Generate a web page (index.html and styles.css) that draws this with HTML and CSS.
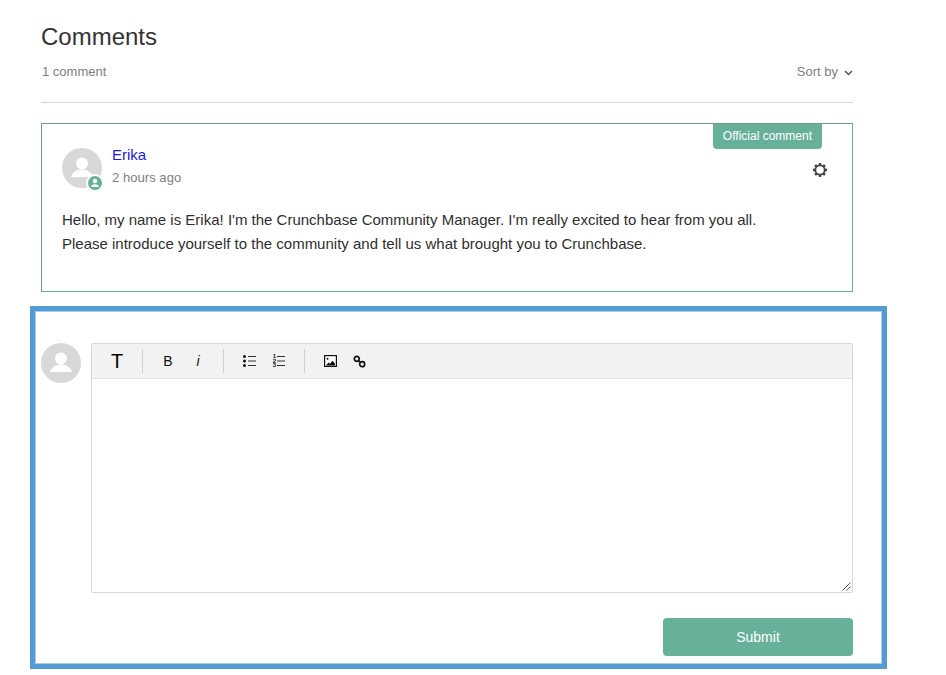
FILE: index.html
```html
<!DOCTYPE html>
<html lang="en">
<head>
<meta charset="utf-8">
<title>Comments</title>
<link rel="stylesheet" href="styles.css">
</head>
<body>
<main class="page">
  <header class="head">
    <h1 class="title">Comments</h1>
    <div class="meta">
      <span class="count">1 comment</span>
      <span class="sort">Sort by
        <svg class="chev" width="9" height="6" viewBox="0 0 9 6"><path d="M1 1l3.500 3.500L8 1" fill="none" stroke="#555" stroke-width="1.500"/></svg>
      </span>
    </div>
  </header>

  <article class="card">
    <span class="badge">Official comment</span>
    <svg class="gear" width="14" height="14" viewBox="0 0 16 16"><path fill="#444" fill-rule="evenodd" d="M6.700 0h2.600l.4 2.100 1.200.5 1.800-1.200 1.900 1.900-1.200 1.800.5 1.200 2.100.4v2.600l-2.100.4-.5 1.200 1.200 1.800-1.900 1.900-1.800-1.200-1.200.5-.4 2.100H6.700l-.4-2.100-1.200-.5-1.800 1.200-1.900-1.900 1.200-1.800-.5-1.200L0 9.300V6.700l2.100-.4.5-1.200-1.200-1.800 1.900-1.900 1.800 1.200 1.200-.5zM8 3.700a4.300 4.300 0 1 0 0 8.600 4.300 4.300 0 0 0 0-8.600z"/></svg>
    <div class="author">
      <div class="avatar">
        <svg width="40" height="40" viewBox="0 0 40 40"><circle cx="20" cy="15.500" r="6" fill="#fff"/><path d="M9 29c1-5 6-7.500 11-7.500S30 24 31 29z" fill="#fff"/></svg>
        <span class="mini">
          <svg width="14" height="14" viewBox="0 0 14 14"><circle cx="7" cy="5" r="2.200" fill="#fff"/><path d="M3 11c.4-2 2-2.800 4-2.800s3.600.8 4 2.800z" fill="#fff"/></svg>
        </span>
      </div>
      <div class="who">
        <a class="name" href="#">Erika</a>
        <span class="time">2 hours ago</span>
      </div>
    </div>
    <p class="body">Hello, my name is Erika! I'm the Crunchbase Community Manager. I'm really excited to hear from you all.<br>Please introduce yourself to the community and tell us what brought you to Crunchbase.</p>
  </article>

  <section class="reply">
    <div class="avatar">
      <svg width="40" height="40" viewBox="0 0 40 40"><circle cx="20" cy="15.500" r="6" fill="#fff"/><path d="M9 29c1-5 6-7.500 11-7.500S30 24 31 29z" fill="#fff"/></svg>
    </div>
    <div class="form">
      <div class="editor">
        <div class="toolbar">
          <span class="tool tool-t">T</span>
          <span class="sep sep-a"></span>
          <span class="tool tool-b">B</span>
          <span class="tool tool-i">i</span>
          <span class="sep sep-b"></span>
          <svg class="ico ico-ul" width="13" height="14" viewBox="0 0 13 14"><g fill="#111"><circle cx="1.500" cy="2.500" r="1.500"/><circle cx="1.500" cy="7" r="1.500"/><circle cx="1.500" cy="11.500" r="1.500"/></g><path d="M5 2.500H13M5 7H13M5 11.500H13" stroke="#333" stroke-width="1"/></svg>
          <span class="ol">
            <span class="nums">1<br>2<br>3</span>
            <svg width="8" height="14" viewBox="0 0 8 14"><path d="M0 2.500H8M0 7H8M0 11.500H8" stroke="#333" stroke-width="1"/></svg>
          </span>
          <span class="sep sep-c"></span>
          <svg class="ico ico-img" width="13" height="12" viewBox="0 0 13 12"><rect x=".6" y=".6" width="11.800" height="10.800" fill="#fff" stroke="#111" stroke-width="1.200"/><circle cx="3.500" cy="3.800" r="1" fill="#111"/><path d="M2 10.500l2.500-3 1.500 1.300 2.500-3 2.500 3v1.700z" fill="#111"/></svg>
          <svg class="ico ico-link" width="13" height="13" viewBox="0 0 13 13"><g fill="none" stroke="#111" stroke-width="1.700"><circle cx="3.800" cy="3.800" r="2.500"/><circle cx="9.200" cy="9.200" r="2.500"/><path d="M5.500 5.500l2 2"/></g></svg>
        </div>
        <div class="area">
          <svg class="grip" width="9" height="9" viewBox="0 0 9 9"><path d="M8.500 .5l-8 8M8.500 4.500l-4 4" stroke="#555" stroke-width="1"/></svg>
        </div>
      </div>
      <div class="actions"><button class="submit" type="button">Submit</button></div>
    </div>
  </section>
</main>
<div class="highlight"></div>
</body>
</html>
```

FILE: styles.css
```css
* { box-sizing: border-box; }
html, body { margin: 0; height: 675px; overflow: hidden; background: #fff; }
body { font-family: "Liberation Sans", Arial, sans-serif; color: #2f2f2f; position: relative; }

.page { width: 853px; padding: 22px 0 0 41px; }

.head { border-bottom: 1px solid #d6d6d6; height: 81px; }
.title { margin: 0; font-size: 24px; line-height: 30px; font-weight: 400; color: #333; }
.meta { display: flex; justify-content: space-between; align-items: center; margin-top: 10px; font-size: 13px; line-height: 20px; color: #808080; }
.count { margin-left: 1px; }
.sort { display: flex; align-items: center; gap: 6px; }
.chev { margin-top: 2px; }

.card { position: relative; height: 169px; margin-top: 20px; padding: 24px 20px 0; border: 1px solid #66b29a; border-left-color: #6e9c8e; border-top-color: #6e9c8e; }
.badge { position: absolute; top: 0; right: 30px; height: 25px; padding: 0 10px; line-height: 25px; font-size: 12px; color: #fff; background: #67b19a; border-radius: 0 0 4px 4px; }
.gear { position: absolute; top: 39px; right: 25px; }

.author { display: flex; gap: 10px; }
.avatar { position: relative; flex: none; width: 40px; height: 40px; border-radius: 50%; background: #d8d8d8; }
.avatar > svg { display: block; }
.mini { position: absolute; left: 24px; top: 26px; width: 18px; height: 18px; border-radius: 50%; background: #67b19a; border: 2px solid #fff; display: flex; align-items: center; justify-content: center; }
.who { display: flex; flex-direction: column; }
.name { font-size: 15px; line-height: 20px; margin-top: -3px; color: #1a1ae6; text-decoration: none; }
.time { font-size: 13px; line-height: 20px; margin-top: 3px; color: #808080; letter-spacing: .05px; }
.body { margin: 20px 0 0; font-size: 15px; line-height: 24px; color: #2f2f2f; }

.reply { display: flex; gap: 10px; margin-top: 51px; }
.form { width: 762px; }
.editor { border: 1px solid #d6d6d6; border-radius: 2px; height: 250px; display: flex; flex-direction: column; }
.toolbar { display: flex; align-items: center; height: 35px; flex: none; background: #f2f2f2; border-bottom: 1px solid #e4e4e4; color: #111; }
.tool { display: block; }
.tool-t { font-size: 20px; line-height: 1; margin-left: 19px; color: #000; }
.sep { width: 1px; height: 24px; background: #d0d0d0; }
.sep-a { margin-left: 19px; }
.tool-b { font-size: 14px; margin-left: 20px; }
.tool-i { font-size: 14px; font-style: italic; margin-left: 24px; }
.sep-b { margin-left: 23px; }
.ico-ul { margin-left: 19px; }
.ol { display: flex; align-items: center; gap: 1px; margin-left: 17px; }
.nums { font-size: 6px; line-height: 4.500px; font-weight: 700; }
.sep-c { margin-left: 19px; }
.ico-img { margin-left: 19px; }
.ico-link { margin-left: 16px; }
.area { position: relative; flex: 1; background: #fff; }
.grip { position: absolute; right: 1px; bottom: 1px; }

.actions { display: flex; justify-content: flex-end; margin-top: 25px; }
.submit { width: 190px; height: 38px; border: 0; border-radius: 4px; background: #67b19a; color: #fff; font: 14px "Liberation Sans", Arial, sans-serif; }

.highlight { position: absolute; left: 30px; top: 306px; width: 857px; height: 363px; border: 5px solid #539bd5; box-shadow: inset 0 0 0 1px #a9cdea; pointer-events: none; }
```
